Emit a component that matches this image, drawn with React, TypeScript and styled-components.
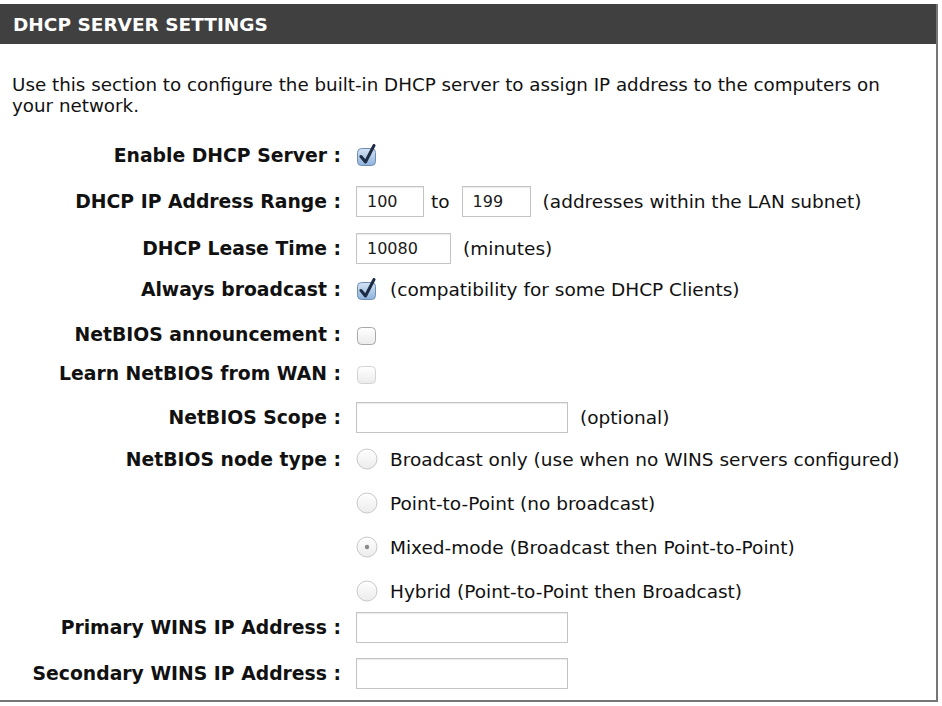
import React from 'react';
import styled, { createGlobalStyle } from 'styled-components';

const GlobalStyle = createGlobalStyle`
  body {
    margin: 0;
    padding-top: 4px;
    background: #fff;
    font-family: "DejaVu Sans", Verdana, sans-serif;
    color: #111;
  }
`;

const Panel = styled.div`
  width: 938px;
  box-sizing: border-box;
  border-right: 2px solid #767676;
  border-bottom: 2px solid #767676;
  padding-bottom: 12px;
`;

const Header = styled.div`
  height: 40px;
  background: #404040;
  color: #fff;
  display: flex;
  align-items: center;
  padding-left: 13px;
  font-size: 18.5px;
  font-weight: bold;
`;

const Intro = styled.p`
  margin: 30px 0 0 12px;
  font-size: 18.3px;
  line-height: 21px;
  width: 900px;
`;

const Form = styled.div`
  margin-top: 24px;
`;

const Row = styled.div<{ $top: number }>`
  display: grid;
  grid-template-columns: 341px 1fr;
  column-gap: 15px;
  align-items: center;
  height: 30px;
  margin-top: ${(p) => p.$top}px;
`;

const Label = styled.div`
  text-align: right;
  font-weight: bold;
  font-size: 18.8px;
  white-space: nowrap;
`;

const Controls = styled.div`
  display: flex;
  align-items: center;
  gap: 12px;
  font-size: 18.5px;
  white-space: nowrap;
`;

const Joiner = styled.span`
  margin-left: -5px;
`;

const TextBox = styled.div<{ $w: number }>`
  width: ${(p) => p.$w}px;
  height: 31px;
  box-sizing: border-box;
  border: 1px solid #c4c4c4;
  box-shadow: inset 0 1px 1px rgba(0, 0, 0, 0.08);
  padding-left: 10px;
  display: flex;
  align-items: center;
  font-size: 16px;
  color: #1a1a1a;
`;

const Hint = styled.span``;

function Check({ checked, disabled }: { checked?: boolean; disabled?: boolean }) {
  return (
    <svg width="22" height="23" viewBox="0 0 22 23" style={{ flex: 'none' }}>
      <defs>
        <linearGradient id="cbOn" x1="0" y1="0" x2="0" y2="1">
          <stop offset="0" stopColor="#d4e3f3" />
          <stop offset="1" stopColor="#8fb3dc" />
        </linearGradient>
        <linearGradient id="cbOff" x1="0" y1="0" x2="0" y2="1">
          <stop offset="0" stopColor="#ffffff" />
          <stop offset="1" stopColor="#ebebeb" />
        </linearGradient>
      </defs>
      <rect
        x="1.5"
        y="4.5"
        width="18"
        height="17"
        rx="4"
        fill={checked ? 'url(#cbOn)' : 'url(#cbOff)'}
        stroke={checked ? '#6d8db3' : disabled ? '#d3d3d3' : '#a8a8a8'}
      />
      {checked && (
        <path
          d="M5 12.5 L9.5 18 L18 1.5"
          fill="none"
          stroke="#1e2b45"
          strokeWidth="3"
          strokeLinecap="round"
          strokeLinejoin="round"
        />
      )}
    </svg>
  );
}

function Radio({ selected }: { selected?: boolean }) {
  return (
    <svg width="22" height="22" viewBox="0 0 22 22" style={{ flex: 'none' }}>
      <defs>
        <linearGradient id="rd" x1="0" y1="0" x2="0" y2="1">
          <stop offset="0" stopColor="#ffffff" />
          <stop offset="1" stopColor="#ececec" />
        </linearGradient>
      </defs>
      <circle cx="11" cy="11" r="10" fill="url(#rd)" stroke="#c9c9c9" />
      {selected && <circle cx="11" cy="11" r="2.2" fill="#8a8a8a" />}
    </svg>
  );
}

const NODE_TYPES = [
  { text: 'Broadcast only (use when no WINS servers configured)', top: 12 },
  { text: 'Point-to-Point (no broadcast)', top: 14 },
  { text: 'Mixed-mode (Broadcast then Point-to-Point)', top: 14, selected: true },
  { text: 'Hybrid (Point-to-Point then Broadcast)', top: 14 },
];

export default function App() {
  return (
    <>
      <GlobalStyle />
      <Panel>
        <Header>DHCP SERVER SETTINGS</Header>
        <Intro>
          Use this section to configure the built-in DHCP server to assign IP address to the computers on
          your network.
        </Intro>
        <Form>
          <Row $top={0}>
            <Label>Enable DHCP Server :</Label>
            <Controls>
              <Check checked />
            </Controls>
          </Row>
          <Row $top={16}>
            <Label>DHCP IP Address Range :</Label>
            <Controls>
              <TextBox $w={68}>100</TextBox>
              <Joiner>to</Joiner>
              <TextBox $w={69}>199</TextBox>
              <Hint>(addresses within the LAN subnet)</Hint>
            </Controls>
          </Row>
          <Row $top={17}>
            <Label>DHCP Lease Time :</Label>
            <Controls>
              <TextBox $w={95}>10080</TextBox>
              <Hint>(minutes)</Hint>
            </Controls>
          </Row>
          <Row $top={11}>
            <Label>Always broadcast :</Label>
            <Controls>
              <Check checked />
              <Hint>(compatibility for some DHCP Clients)</Hint>
            </Controls>
          </Row>
          <Row $top={15}>
            <Label>NetBIOS announcement :</Label>
            <Controls>
              <Check />
            </Controls>
          </Row>
          <Row $top={9}>
            <Label>Learn NetBIOS from WAN :</Label>
            <Controls>
              <Check disabled />
            </Controls>
          </Row>
          <Row $top={14}>
            <Label>NetBIOS Scope :</Label>
            <Controls>
              <TextBox $w={212} />
              <Hint>(optional)</Hint>
            </Controls>
          </Row>
          {NODE_TYPES.map((n, i) => (
            <Row $top={n.top} key={n.text}>
              <Label>{i === 0 ? 'NetBIOS node type :' : ''}</Label>
              <Controls>
                <Radio selected={n.selected} />
                <Hint>{n.text}</Hint>
              </Controls>
            </Row>
          ))}
          <Row $top={6}>
            <Label>Primary WINS IP Address :</Label>
            <Controls>
              <TextBox $w={212} />
            </Controls>
          </Row>
          <Row $top={16}>
            <Label>Secondary WINS IP Address :</Label>
            <Controls>
              <TextBox $w={212} />
            </Controls>
          </Row>
        </Form>
      </Panel>
    </>
  );
}
